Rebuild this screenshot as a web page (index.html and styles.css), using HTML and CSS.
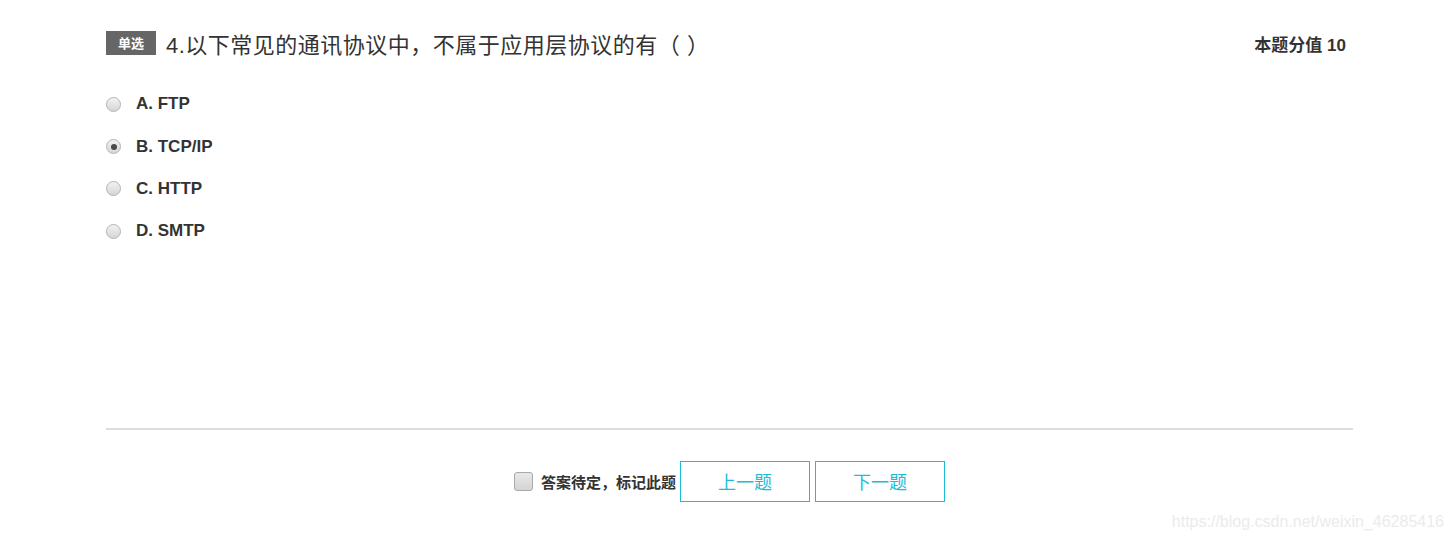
FILE: index.html
```html
<!DOCTYPE html>
<html lang="zh-CN">
<head>
    <meta charset="UTF-8">
    <meta name="viewport" content="width=device-width, initial-scale=1.0">
    <title>单选题</title>
    <link rel="stylesheet" href="styles.css">
</head>
<body>
    <div class="exam">
        <div class="question-head">
            <div class="question-title">
                <span class="badge">单选</span>
                <span class="title-text">4.以下常见的通讯协议中，不属于应用层协议的有（ ）</span>
            </div>
            <div class="score">本题分值 10</div>
        </div>

        <ul class="options">
            <li><span class="radio"></span><span class="opt-text">A. FTP</span></li>
            <li><span class="radio checked"></span><span class="opt-text">B. TCP/IP</span></li>
            <li><span class="radio"></span><span class="opt-text">C. HTTP</span></li>
            <li><span class="radio"></span><span class="opt-text">D. SMTP</span></li>
        </ul>

        <div class="divider"></div>

        <div class="exam-footer">
            <label class="mark">
                <span class="checkbox"></span>
                <span class="mark-text">答案待定，标记此题</span>
            </label>
            <button class="nav-btn">上一题</button>
            <button class="nav-btn">下一题</button>
        </div>
    </div>

    <div class="watermark">https://blog.csdn.net/weixin_46285416</div>
</body>
</html>
```

FILE: styles.css
```css
html, body {
    margin: 0;
    padding: 0;
}

body {
    font-family: "Liberation Sans", Arial, "Noto Sans CJK SC", sans-serif;
    color: #333;
    background: #fff;
    position: relative;
    min-height: 541px;
}

.exam {
    width: 1247px;
    margin-left: 106px;
}

/* question header */
.question-head {
    display: flex;
    justify-content: space-between;
    align-items: center;
    padding-top: 30px;
    height: 26px;
    padding-right: 7px;
}

.question-title {
    display: flex;
    align-items: center;
}

.badge {
    display: inline-block;
    width: 50px;
    height: 24px;
    line-height: 24px;
    text-align: center;
    background: #666;
    color: #fff;
    font-size: 13px;
    font-weight: bold;
    font-family: "Noto Sans CJK SC", sans-serif;
}

.title-text {
    margin-left: 10px;
    font-size: 22px;
    letter-spacing: 0.5px;
    color: #333;
    font-family: "Liberation Sans", "Noto Sans CJK SC", sans-serif;
}

.score {
    font-size: 17px;
    font-weight: bold;
    color: #333;
}

/* options */
.options {
    list-style: none;
    margin: 27px 0 0;
    padding: 0;
}

.options li {
    display: flex;
    align-items: center;
    height: 42.4px;
}

.radio {
    display: inline-block;
    box-sizing: border-box;
    width: 15px;
    height: 15px;
    border-radius: 50%;
    border: 1px solid #b4b4b4;
    background: linear-gradient(#f2f2f2, #d6d6d6);
    position: relative;
}

.radio.checked::after {
    content: '';
    position: absolute;
    left: 3.5px;
    top: 3.5px;
    width: 6px;
    height: 6px;
    border-radius: 50%;
    background: #4a4a4a;
}

.opt-text {
    margin-left: 15px;
    font-size: 17px;
    font-weight: bold;
    color: #333;
}

.divider {
    margin-top: 175px;
    border-top: 2px solid #ddd;
}

/* footer */
.exam-footer {
    display: flex;
    justify-content: center;
    align-items: center;
    margin-top: 31px;
}

.mark {
    display: flex;
    align-items: center;
}

.checkbox {
    display: inline-block;
    box-sizing: border-box;
    width: 19px;
    height: 19px;
    border: 1px solid #aaa;
    border-radius: 3px;
    background: linear-gradient(#e8e8e8, #d4d4d4);
}

.mark-text {
    margin-left: 8px;
    font-size: 15px;
    font-weight: bold;
    color: #333;
    font-family: "Noto Sans CJK SC", sans-serif;
}

.nav-btn {
    width: 130px;
    height: 41px;
    margin-left: 4px;
    border: 1px solid #1bbcd8;
    background: #fff;
    color: #1bbcd8;
    font-size: 18px;
    font-family: "Noto Sans CJK SC", sans-serif;
    cursor: pointer;
}

.nav-btn + .nav-btn {
    margin-left: 5px;
}

.watermark {
    position: absolute;
    right: 9px;
    bottom: 10px;
    font-size: 16px;
    color: #ebebeb;
}
```
